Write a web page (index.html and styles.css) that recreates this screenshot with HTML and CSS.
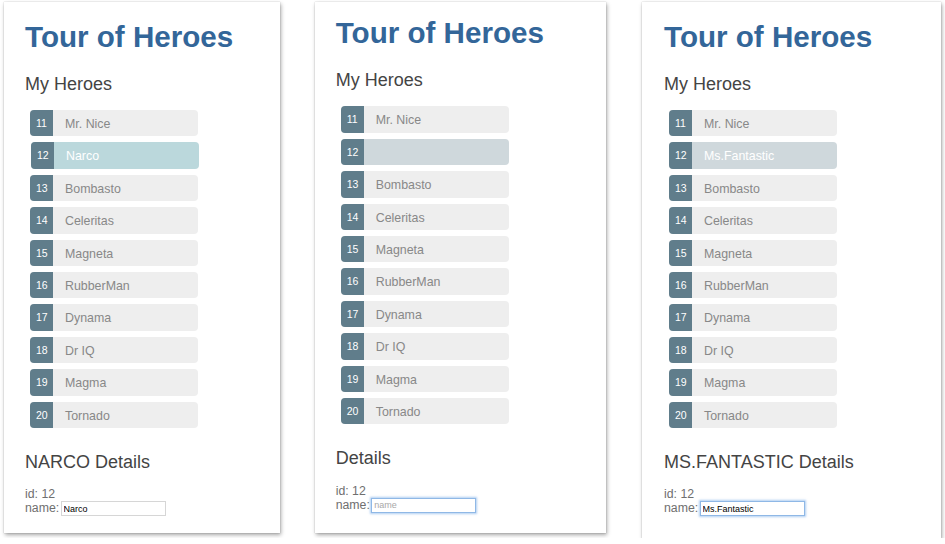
FILE: index.html
```html
<!DOCTYPE html>
<html lang="en">
<head>
<meta charset="utf-8">
<title>Tour of Heroes</title>
<link rel="stylesheet" href="styles.css">
</head>
<body>
<div class="stage">
  <section class="panel p1">
    <h1 class="title">Tour of Heroes</h1>
    <h2 class="subtitle">My Heroes</h2>
    <ul class="heroes">
      <li class="hero"><span class="badge">11</span><span class="name">Mr. Nice</span></li>
      <li class="hero selected hovered"><span class="badge">12</span><span class="name">Narco</span></li>
      <li class="hero"><span class="badge">13</span><span class="name">Bombasto</span></li>
      <li class="hero"><span class="badge">14</span><span class="name">Celeritas</span></li>
      <li class="hero"><span class="badge">15</span><span class="name">Magneta</span></li>
      <li class="hero"><span class="badge">16</span><span class="name">RubberMan</span></li>
      <li class="hero"><span class="badge">17</span><span class="name">Dynama</span></li>
      <li class="hero"><span class="badge">18</span><span class="name">Dr IQ</span></li>
      <li class="hero"><span class="badge">19</span><span class="name">Magma</span></li>
      <li class="hero"><span class="badge">20</span><span class="name">Tornado</span></li>
    </ul>
    <h2 class="details-title">NARCO Details</h2>
    <div class="field">id: 12</div>
    <div class="field">name: <input class="name-input" type="text" value="Narco"></div>
  </section>

  <section class="panel p2">
    <h1 class="title">Tour of Heroes</h1>
    <h2 class="subtitle">My Heroes</h2>
    <ul class="heroes">
      <li class="hero"><span class="badge">11</span><span class="name">Mr. Nice</span></li>
      <li class="hero selected"><span class="badge">12</span><span class="name"></span></li>
      <li class="hero"><span class="badge">13</span><span class="name">Bombasto</span></li>
      <li class="hero"><span class="badge">14</span><span class="name">Celeritas</span></li>
      <li class="hero"><span class="badge">15</span><span class="name">Magneta</span></li>
      <li class="hero"><span class="badge">16</span><span class="name">RubberMan</span></li>
      <li class="hero"><span class="badge">17</span><span class="name">Dynama</span></li>
      <li class="hero"><span class="badge">18</span><span class="name">Dr IQ</span></li>
      <li class="hero"><span class="badge">19</span><span class="name">Magma</span></li>
      <li class="hero"><span class="badge">20</span><span class="name">Tornado</span></li>
    </ul>
    <h2 class="details-title">Details</h2>
    <div class="field">id: 12</div>
    <div class="field">name: <input class="name-input focused" type="text" placeholder="name"></div>
  </section>

  <section class="panel p3">
    <h1 class="title">Tour of Heroes</h1>
    <h2 class="subtitle">My Heroes</h2>
    <ul class="heroes">
      <li class="hero"><span class="badge">11</span><span class="name">Mr. Nice</span></li>
      <li class="hero selected"><span class="badge">12</span><span class="name">Ms.Fantastic</span></li>
      <li class="hero"><span class="badge">13</span><span class="name">Bombasto</span></li>
      <li class="hero"><span class="badge">14</span><span class="name">Celeritas</span></li>
      <li class="hero"><span class="badge">15</span><span class="name">Magneta</span></li>
      <li class="hero"><span class="badge">16</span><span class="name">RubberMan</span></li>
      <li class="hero"><span class="badge">17</span><span class="name">Dynama</span></li>
      <li class="hero"><span class="badge">18</span><span class="name">Dr IQ</span></li>
      <li class="hero"><span class="badge">19</span><span class="name">Magma</span></li>
      <li class="hero"><span class="badge">20</span><span class="name">Tornado</span></li>
    </ul>
    <h2 class="details-title">MS.FANTASTIC Details</h2>
    <div class="field">id: 12</div>
    <div class="field">name: <input class="name-input focused" type="text" value="Ms.Fantastic"></div>
  </section>
</div>
</body>
</html>
```

FILE: styles.css
```css
html, body {
  margin: 0;
  background: #ffffff;
  font-family: "Liberation Sans", Arial, sans-serif;
}

.stage {
  display: flex;
  align-items: flex-start;
  padding: 2px 0 0 4px;
}

.panel {
  box-sizing: border-box;
  background: #ffffff;
  box-shadow: 0 0 1px rgba(0, 0, 0, 0.25), 1px 2px 4px rgba(0, 0, 0, 0.35);
  padding: 17.5px 0 0 21px;
}

.p1 {
  width: 276px;
  height: 531px;
}

.p2 {
  width: 291px;
  height: 531px;
  margin-left: 35px;
  padding-top: 14px;
  padding-left: 20.7px;
}

.p3 {
  width: 299px;
  height: 536px;
  margin-left: 36px;
  padding-left: 22px;
}

.title {
  margin: 0;
  font-size: 29.6px;
  line-height: 34px;
  font-weight: bold;
  color: #336699;
}

.subtitle,
.details-title {
  margin: 19.3px 0 0;
  font-size: 18px;
  line-height: 22px;
  font-weight: normal;
  color: #444444;
}

.details-title {
  margin-top: 22.8px;
}

.heroes {
  list-style: none;
  margin: 15.2px 0 0 5px;
  padding: 0;
  width: 168px;
  display: flex;
  flex-direction: column;
  gap: 6px;
}

.hero {
  display: flex;
  align-items: stretch;
  height: 26.4px;
  background: #eeeeee;
  border-radius: 4px;
  overflow: hidden;
}

.hero.selected {
  background: #cfd8dc;
}

.hero.selected.hovered {
  background: #bbd8dc;
  transform: translateX(1px);
}

.badge {
  box-sizing: border-box;
  width: 23px;
  flex: none;
  background: #607d8b;
  color: #ffffff;
  font-size: 10.5px;
  line-height: 12px;
  padding: 7px 0 0 6px;
}

.name {
  margin-left: 12px;
  padding-top: 7px;
  font-size: 12.4px;
  line-height: 14px;
  color: #888888;
}

.hero.selected .name {
  color: #ffffff;
}

.field {
  font-size: 12.3px;
  line-height: 13px;
  color: #6f6f6f;
}

.details-title + .field {
  margin-top: 15.5px;
}

.name-input {
  box-sizing: border-box;
  width: 105px;
  height: 15px;
  margin: 0 0 0 -2px;
  padding: 0 2px;
  border: 1px solid #d6d6d6;
  font-family: "Liberation Sans", Arial, sans-serif;
  font-size: 9px;
  color: #000000;
  background: #ffffff;
  outline: none;
}

.name-input::placeholder {
  color: #a8a8a8;
}

.name-input.focused {
  border-color: #8fb8e6;
  box-shadow: 0 0 2px 1px rgba(110, 165, 230, 0.55);
}
```
